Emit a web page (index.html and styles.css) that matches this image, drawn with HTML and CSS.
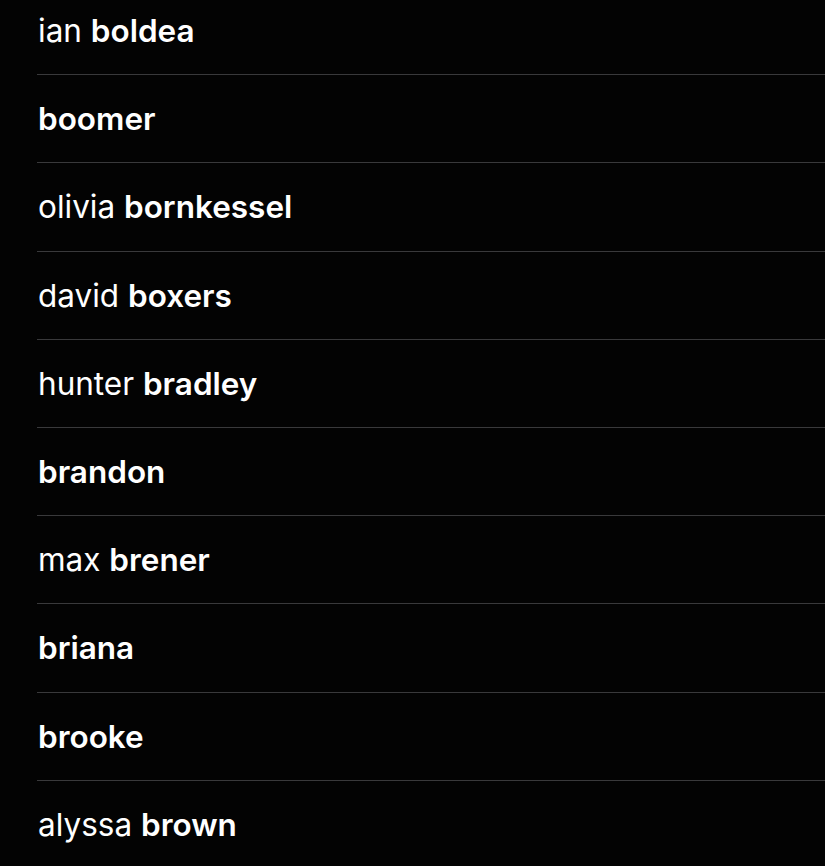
FILE: index.html
```html
<!DOCTYPE html>
<html>
<head>
<meta charset="utf-8">
<link rel="stylesheet" href="styles.css">
</head>
<body>
<ul class="list">
  <li class="row"><span class="name">ian <b>boldea</b></span></li>
  <li class="row"><span class="name"><b>boomer</b></span></li>
  <li class="row"><span class="name">olivia <b>bornkessel</b></span></li>
  <li class="row"><span class="name">david <b>boxers</b></span></li>
  <li class="row"><span class="name">hunter <b>bradley</b></span></li>
  <li class="row"><span class="name"><b>brandon</b></span></li>
  <li class="row"><span class="name">max <b>brener</b></span></li>
  <li class="row"><span class="name"><b>briana</b></span></li>
  <li class="row"><span class="name"><b>brooke</b></span></li>
  <li class="row"><span class="name">alyssa <b>brown</b></span></li>
</ul>
</body>
</html>
```
FILE: styles.css
```css
html, body {
  margin: 0;
  padding: 0;
  background: #030303;
  height: 100%;
  overflow: hidden;
}
.list {
  list-style: none;
  margin: -13px 0 0 37px;
  padding: 0;
  font-family: Inter, "Noto Sans", sans-serif;
  font-size: 31.5px;
  color: #fff;
}
.row {
  height: 88.2px;
  box-sizing: border-box;
  border-bottom: 1px solid #39393b;
  display: flex;
  align-items: center;
  padding-left: 1px;
}
.name b {
  font-weight: 600;
}
```
